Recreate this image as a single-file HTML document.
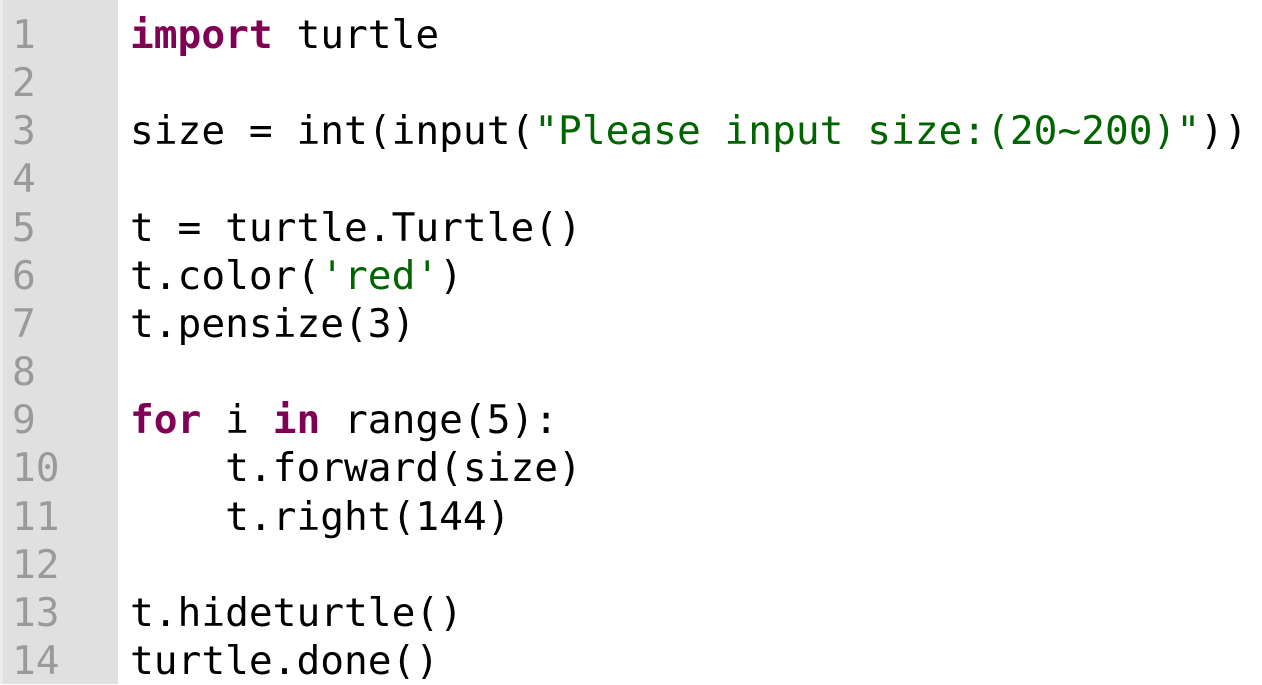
<!DOCTYPE html>
<html><head><style>
html,body{margin:0;padding:0;background:#fff;width:1262px;height:684px;overflow:hidden}
.g{position:absolute;left:0;top:0;width:118px;height:684px;background:#e0e0e0;border-left:3px solid #ebebeb;box-sizing:border-box}
pre{margin:0;position:absolute;top:11px;font-family:"DejaVu Sans Mono","Liberation Mono",monospace;font-size:39.5px;line-height:48.15px}
.n{left:12px;color:#9a9a9a}
.c{left:130px;color:#000}
.k{color:#7f0055;font-weight:bold}
.s{color:#006400}
</style></head><body>
<div class="g"></div>
<pre class="n">1
2
3
4
5
6
7
8
9
10
11
12
13
14</pre>
<pre class="c"><span class="k">import</span> turtle

size = int(input(<span class="s">"Please input size:(20~200)"</span>))

t = turtle.Turtle()
t.color(<span class="s">'red'</span>)
t.pensize(3)

<span class="k">for</span> i <span class="k">in</span> range(5):
    t.forward(size)
    t.right(144)

t.hideturtle()
turtle.done()</pre>
</body></html>
